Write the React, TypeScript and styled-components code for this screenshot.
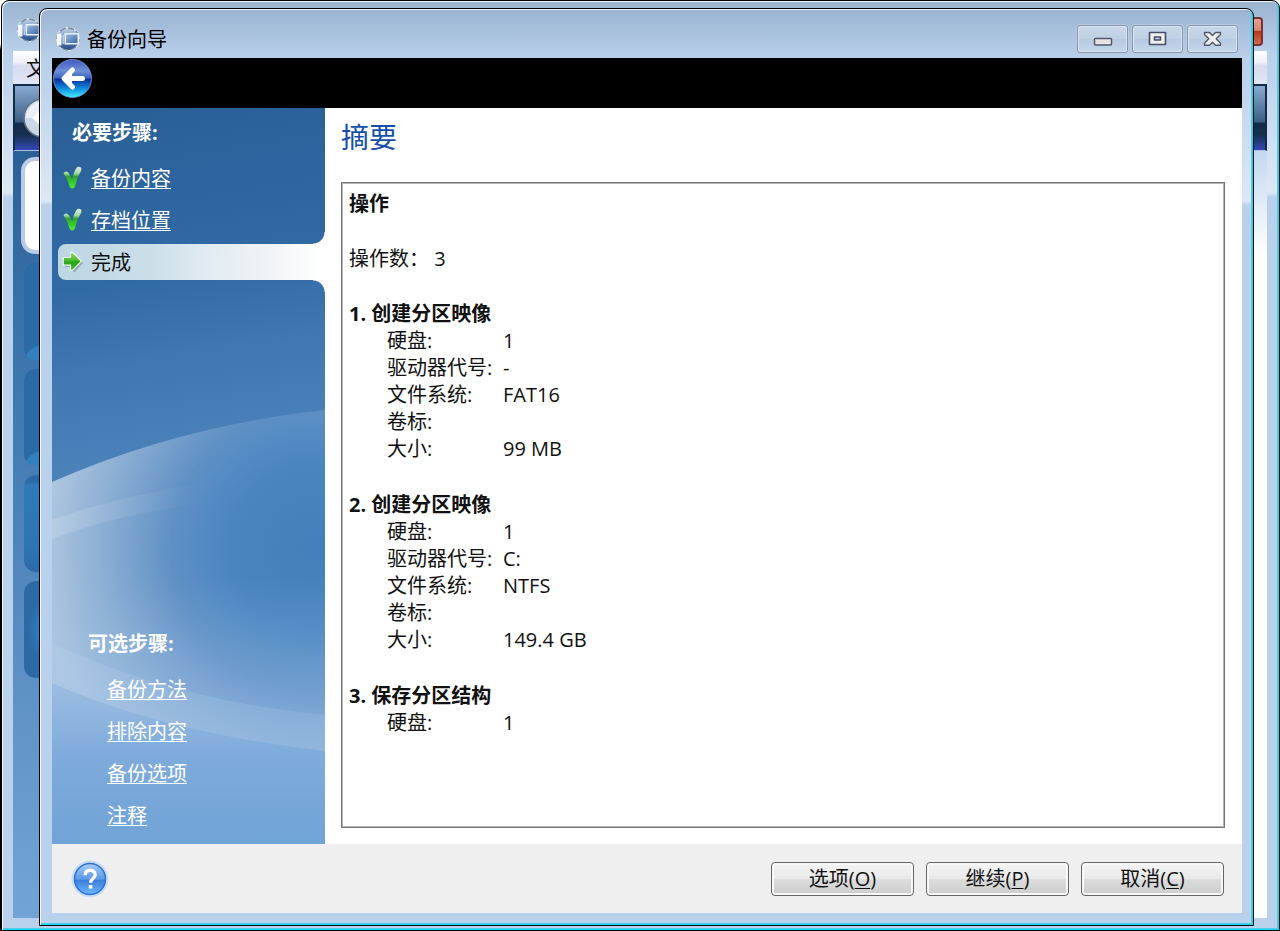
import React from "react";
import styled, { createGlobalStyle, css } from "styled-components";

const GlobalStyle = createGlobalStyle`
  *, *::before, *::after { box-sizing: border-box; }
  body {
    margin: 0;
    font-family: "Open Sans", "Noto Sans CJK SC", sans-serif;
    font-size: 20px;
    line-height: 27px;
    color: #111;
  }
  h1, h2, h3, p, dl, dd, ul { margin: 0; padding: 0; }
  ul { list-style: none; }
  svg { display: block; }
  button { font: inherit; color: inherit; padding: 0; cursor: pointer; }
`;

const Desktop = styled.div`
  display: grid;
  grid-template: minmax(100vh, auto) / minmax(0, 1fr);
  background: linear-gradient(#fff 44px, #000 50px);
`;

const glassFrame = css`
  grid-area: 1 / 1;
  display: flex;
  flex-direction: column;
  border: 1px solid #000;
  border-radius: 8px 8px 0 0;
  box-shadow: inset 1px 1px 0 #f2f6fb, inset -1px -1px 0 #10dcf2, inset -2px -2px 0 #4fcbe8;
`;

const BackWindow = styled.div`
  ${glassFrame}
  margin-left: 1px;
  padding: 0 12px 12px 11px;
  background: linear-gradient(#9ab3d0 0, #b9d0ea 50px, #c0d5ed 84px, #dde8f5 192px, #b9d1ea 196px);
`;

const BackTitleBar = styled.div`
  display: flex;
  justify-content: space-between;
  align-items: flex-start;
  height: 50px;
  padding: 16px 4px 0 3px;
`;

const BackClose = styled.button`
  width: 48px;
  height: 29px;
  border: 2px solid #7c3230;
  border-radius: 4px;
  background: linear-gradient(#e6a094 0, #d98574 45%, #b93a1e 50%, #cf6a4e 100%);
`;

const BackMenuBar = styled.div`
  height: 33px;
  padding: 4px 13px;
  background: linear-gradient(#fff 0, #eef0f9 35%, #d6dbee 45%, #e2e6f5 100%);
`;

const BackToolbar = styled.div`
  height: 67px;
  padding: 12px 8px;
  border: 2px solid #12294a;
  border-bottom: 1px solid #aebfe6;
  background: linear-gradient(#88a9d2 0, #3d5f86 56%, #112b49 58%, #17304f 76%, #3449b8 100%);
`;

const BackBody = styled.div`
  flex: 1;
  display: flex;
  background: linear-gradient(#c4d8f0 0, #fff 105px);
`;

const BackSidebar = styled.div`
  display: flex;
  flex-direction: column;
  gap: 9px;
  width: 120px;
  padding: 6px 0 0 8px;
  background: linear-gradient(#2a6096, #3a70a8 20%, #4a80b8 45%, #6294c8 75%, #72a4d8 100%);
`;

const BackCard = styled.div`
  height: 97px;
  border: 4px solid #b9cbe6;
  border-radius: 14px;
  background: #fff;
`;

const tileFills = {
  curl: "radial-gradient(ellipse 24px 16px at 24px 96px, #3180bf 90%, transparent 96%), #2c6aa6",
  bright: "linear-gradient(#2c6aa8 8%, #3079b8 10%, #2f74b2 75%, #2c69a8 100%)",
  halo: "radial-gradient(ellipse 24px 34px at 28px 50%, #3179b8 60%, transparent 100%), #2c6aa6",
};

const BackTile = styled.div<{ $fill: keyof typeof tileFills }>`
  height: 97px;
  margin-left: 3px;
  border-radius: 12px;
  background: ${(p) => tileFills[p.$fill]};
`;

const Dialog = styled.section`
  ${glassFrame}
  z-index: 1;
  margin: 8px 26px 5px 39px;
  padding: 0 11px 12px 12px;
  background: linear-gradient(#99b3d1 0, #b9d0ea 49px, #c0d5ed 84px, #dde8f5 192px, #b9d1ea 196px);
`;

const TitleBar = styled.header`
  display: flex;
  align-items: center;
  gap: 6px;
  height: 49px;
  padding: 11px 4px 0 3px;
`;

const Title = styled.h1`
  flex: 1;
  font-size: 20px;
  font-weight: 400;
  color: #000;
`;

const WindowControls = styled.div`
  display: flex;
  gap: 4px;
`;

const ControlButton = styled.button`
  display: flex;
  align-items: center;
  justify-content: center;
  width: 51px;
  height: 28px;
  border: 1px solid #8796b0;
  border-radius: 3px;
  background: linear-gradient(#c8d6e8 0, #c0d0e4 50%, #b8cae2 52%, #c5d7ec 100%);
  box-shadow: inset 0 0 0 1px #dbe5f1, 0 0 0 1px #b9c9de;
`;

const NavBar = styled.nav`
  height: 50px;
  padding: 0 1px;
  background: #000;
`;

const IconButton = styled.button`
  display: block;
  border: 0;
  background: none;
`;

const Body = styled.div`
  flex: 1;
  display: flex;
  background: #fff;
`;

const Sidebar = styled.aside`
  position: relative;
  display: flex;
  flex-direction: column;
  flex: 0 0 273px;
  color: #fff;
`;

const SidebarArt = styled.svg`
  position: absolute;
  inset: 0;
  width: 100%;
  height: 100%;
`;

const StepGroup = styled.div<{ $optional?: boolean }>`
  position: relative;
  padding: ${(p) => (p.$optional ? "0 0 11px 36px" : "10px 0 0 6px")};
  margin-top: ${(p) => (p.$optional ? "auto" : "0")};
`;

const StepHeading = styled.h2<{ $indent?: boolean }>`
  height: 30px;
  margin-bottom: 12px;
  padding-left: ${(p) => (p.$indent ? "14px" : "0")};
  font-size: 20px;
  line-height: 30px;
  font-weight: 700;
`;

const StepList = styled.ul<{ $indent?: boolean }>`
  display: flex;
  flex-direction: column;
  gap: 6px;
  padding-left: ${(p) => (p.$indent ? "19px" : "0")};
`;

const Step = styled.li<{ $active?: boolean }>`
  position: relative;
  display: flex;
  align-items: center;
  height: 36px;
  ${(p) =>
    p.$active &&
    css`
      color: #111;
      border-radius: 8px 0 0 8px;
      background: linear-gradient(90deg, #bcd6e3 0, #cbdfe9 35%, #e0ebf1 55%, #eff3f6 78%, #fff 98%);
      &::before,
      &::after {
        content: "";
        position: absolute;
        right: 0;
        width: 12px;
        height: 12px;
      }
      &::before {
        bottom: 100%;
        background: radial-gradient(circle at 0 0, transparent 11px, #fff 12px);
      }
      &::after {
        top: 100%;
        background: radial-gradient(circle at 0 100%, transparent 11px, #fff 12px);
      }
    `}
`;

const StepIcon = styled.svg`
  width: 24px;
  height: 24px;
  margin: 0 6px 0 3px;
`;

const StepLink = styled.a`
  color: inherit;
  text-underline-offset: 2px;
  text-decoration-thickness: 1px;
`;

const Main = styled.main`
  flex: 1;
  display: flex;
  flex-direction: column;
  min-width: 0;
  padding: 12px 17px 16px 16px;
`;

const PageTitle = styled.h2`
  margin-bottom: 28px;
  font-size: 28px;
  line-height: 34px;
  font-weight: 400;
  color: #1450a8;
`;

const Summary = styled.div`
  flex: 1;
  display: flex;
  flex-direction: column;
  gap: 28px;
  padding: 7px;
  border: 1px solid #757575;
  box-shadow: inset 0 0 0 1px #b4b4b4;
`;

const OperationList = styled.div`
  display: flex;
  flex-direction: column;
  gap: 29px;
`;

const SummaryHeading = styled.h3`
  font-size: 20px;
  font-weight: 700;
`;

const Details = styled.dl`
  display: grid;
  grid-template-columns: 116px 1fr;
  grid-auto-rows: 27px;
  padding-left: 38px;
`;

const Term = styled.dt`
  white-space: nowrap;
`;

const Footer = styled.footer`
  display: flex;
  align-items: center;
  height: 69px;
  padding: 0 18px 0 19px;
  background: #efefef;
`;

const FooterActions = styled.div`
  display: flex;
  gap: 12px;
  margin-left: auto;
`;

const ActionButton = styled.button`
  width: 143px;
  height: 34px;
  border: 1px solid #666;
  border-radius: 4px;
  background: linear-gradient(#f3f3f3 0, #eaeaea 48%, #dcdcdc 52%, #cdcdcd 100%);
  box-shadow: inset 0 0 0 2px #f8f8f8;
  u {
    text-underline-offset: 2px;
    text-decoration-thickness: 1px;
  }
`;

const AppIcon = () => (
  <svg width="26" height="26" viewBox="0 0 26 26" aria-hidden="true">
    <defs>
      <linearGradient id="app" x1="0" y1="0" x2="0" y2="1">
        <stop offset="0" stopColor="#c3d3e8" />
        <stop offset="0.4" stopColor="#7d9cc8" />
        <stop offset="1" stopColor="#234a85" />
      </linearGradient>
      <linearGradient id="app-screen" x1="0" y1="0" x2="1" y2="1">
        <stop offset="0" stopColor="#9bb8de" />
        <stop offset="1" stopColor="#3f6aa8" />
      </linearGradient>
    </defs>
    <circle cx="13" cy="13" r="12" fill="#dfe7f0" />
    <circle cx="13" cy="13" r="11" fill="url(#app)" stroke="#76879f" strokeWidth="1.500" strokeDasharray="6 2.600" />
    <path d="M2 7.500h4.500v12H2z" fill="#f2f7fc" />
    <path d="M7.500 9h1.500v9H7.500z" fill="#b9cee8" />
    <path d="M9.500 7H24v11.500H9.500z" fill="#e9f1fa" />
    <path d="M11 8.500h11.500v8.500H11z" fill="url(#app-screen)" />
  </svg>
);

const CheckIcon = () => (
  <StepIcon viewBox="0 0 24 24" aria-hidden="true">
    <defs>
      <linearGradient id="check" x1="0" y1="0" x2="0" y2="1">
        <stop offset="0" stopColor="#dcefe0" />
        <stop offset="0.3" stopColor="#a3d8a3" />
        <stop offset="0.45" stopColor="#2fa52f" />
        <stop offset="0.7" stopColor="#35c927" />
        <stop offset="1" stopColor="#4af032" />
      </linearGradient>
    </defs>
    <path
      d="M3 6.500Q5.800 4.200 8 7.500L11.200 13.200Q12.400 6.500 15.200 2.200Q17.400 -.2 20 1.600Q20.800 2.800 20 5Q15.600 12 14 20.200Q12.800 22.800 10.800 22.400Q8.800 22 8.200 19.800Q6.600 12.600 3 8.400Q2.500 7.300 3 6.500Z"
      fill="url(#check)"
    />
  </StepIcon>
);

const ArrowIcon = () => (
  <StepIcon viewBox="0 0 24 24" aria-hidden="true">
    <defs>
      <linearGradient id="arrow" x1="0" y1="0" x2="0" y2="1">
        <stop offset="0" stopColor="#8bdc6c" />
        <stop offset="0.45" stopColor="#45bd2c" />
        <stop offset="0.55" stopColor="#2ba31a" />
        <stop offset="1" stopColor="#3fb82c" />
      </linearGradient>
    </defs>
    <path d="M4 9.500h7.500V4.500L22 13l-8.500 9-3-1.500v-3.500H4z" fill="#4d6d78" opacity="0.45" />
    <path
      d="M2.200 7.500H9.500V2.800Q10.500 1.800 12 2.800L20.500 11.200 12 19.800Q10.500 20.800 9.500 19.800V15.200H2.200z"
      fill="url(#arrow)"
      stroke="#f0f9ee"
      strokeWidth="1.200"
      strokeLinejoin="round"
    />
  </StepIcon>
);

const BackIcon = () => (
  <svg width="40" height="41" viewBox="0 0 40 41" aria-hidden="true">
    <defs>
      <linearGradient id="orb" x1="0" y1="0" x2="0" y2="1">
        <stop offset="0" stopColor="#3f58c0" />
        <stop offset="0.3" stopColor="#6f8fd8" />
        <stop offset="0.48" stopColor="#3a66c0" />
        <stop offset="0.52" stopColor="#06309a" />
        <stop offset="0.75" stopColor="#0f86dc" />
        <stop offset="1" stopColor="#3ff0ff" />
      </linearGradient>
    </defs>
    <circle cx="19.500" cy="20.500" r="19" fill="url(#orb)" stroke="#7f9ce0" strokeWidth="0.800" />
    <path d="M19.500 12 11 20.500l8.500 8.500M12 20.500h17.500" stroke="#fff" strokeWidth="5" strokeLinecap="round" strokeLinejoin="round" fill="none" />
    <path d="M10 20.500 19 12v17z" fill="#fff" />
  </svg>
);

const BackWindowOrb = () => (
  <svg width="40" height="40" viewBox="0 0 40 40" aria-hidden="true">
    <circle cx="20" cy="20" r="19" fill="#c9d8e4" stroke="#5e7187" strokeWidth="1.500" />
    <path d="M3 20a17 17 0 0 1 34 0z" fill="#eaf0f5" />
    <path d="M9 20 20 10v20z" fill="#fff" />
  </svg>
);

const HelpIcon = () => (
  <svg width="38" height="38" viewBox="0 0 38 38" aria-hidden="true">
    <defs>
      <linearGradient id="help" x1="0" y1="0" x2="0" y2="1">
        <stop offset="0" stopColor="#a8cbf6" />
        <stop offset="0.5" stopColor="#5c9ae8" />
        <stop offset="0.55" stopColor="#3b7fdc" />
        <stop offset="1" stopColor="#6fb8fb" />
      </linearGradient>
    </defs>
    <circle cx="19" cy="19" r="18.500" fill="#c8def8" />
    <circle cx="19" cy="19" r="15.500" fill="url(#help)" stroke="#2f6fd0" strokeWidth="1.500" />
    <path
      d="M14.200 15.200c0-3.200 2-5 5-5s5 1.800 5 4.500c0 3.800-4.600 3.800-4.600 8"
      stroke="#fff"
      strokeWidth="3.400"
      fill="none"
    />
    <rect x="17.800" y="25" width="3.600" height="3.600" fill="#fff" />
  </svg>
);

const MinimizeIcon = () => (
  <svg width="20" height="18" viewBox="0 0 20 18" aria-hidden="true">
    <rect x="1.500" y="8.500" width="17" height="6.500" rx="1" fill="#e6e4e2" stroke="#50586c" strokeWidth="1.500" />
  </svg>
);

const MaximizeIcon = () => (
  <svg width="20" height="16" viewBox="0 0 20 16" aria-hidden="true">
    <path
      d="M1.500 1.500h16v12h-16zM6.500 6v3h6V6z"
      fillRule="evenodd"
      fill="#f0efee"
      stroke="#454e66"
      strokeWidth="1.600"
      strokeLinejoin="round"
    />
  </svg>
);

const CloseIcon = () => (
  <svg width="20" height="16" viewBox="0 0 20 16" aria-hidden="true">
    <path
      d="M1.500 1.500H6.500L9.500 4.500l3-3h5v2L13.200 7.800l4.300 4.500v2h-5l-3-3-3 3h-5v-2L5.800 7.800 1.500 3.500z"
      fill="#f0efee"
      stroke="#50586c"
      strokeWidth="1.400"
      strokeLinejoin="round"
    />
  </svg>
);

const SidebarBackground = () => (
  <SidebarArt viewBox="0 0 273 736" preserveAspectRatio="none" aria-hidden="true">
    <defs>
      <linearGradient id="sky" x1="0" y1="0" x2="0.06" y2="1">
        <stop offset="0" stopColor="#2a5f95" />
        <stop offset="0.25" stopColor="#306aa5" />
        <stop offset="0.36" stopColor="#4177b0" />
        <stop offset="0.5" stopColor="#4c82ba" />
        <stop offset="1" stopColor="#5a90c8" />
      </linearGradient>
      <radialGradient id="glow" gradientUnits="userSpaceOnUse" cx="262" cy="440" r="275">
        <stop offset="0" stopColor="#447fbb" />
        <stop offset="0.3" stopColor="#4a85c0" />
        <stop offset="0.52" stopColor="#5f90c5" />
        <stop offset="0.75" stopColor="#88acd2" />
        <stop offset="1" stopColor="#b0c9e1" />
      </radialGradient>
      <linearGradient id="floor" x1="0" y1="0" x2="0" y2="1">
        <stop offset="0" stopColor="#9dbde2" />
        <stop offset="0.45" stopColor="#7eabdb" />
        <stop offset="1" stopColor="#70a3d7" />
      </linearGradient>
      <linearGradient id="streak" x1="0" y1="0" x2="1" y2="0">
        <stop offset="0" stopColor="#fff" stopOpacity="0.16" />
        <stop offset="1" stopColor="#fff" stopOpacity="0" />
      </linearGradient>
      <linearGradient id="lift" x1="0" y1="0" x2="0" y2="1">
        <stop offset="0" stopColor="#8fb6e0" stopOpacity="0" />
        <stop offset="1" stopColor="#8fb6e0" stopOpacity="0.600" />
      </linearGradient>
      <linearGradient id="band" x1="0" y1="0" x2="1" y2="0">
        <stop offset="0" stopColor="#d0e0f2" stopOpacity="0.150" />
        <stop offset="1" stopColor="#a8c8ea" stopOpacity="0.220" />
      </linearGradient>
    </defs>
    <rect width="273" height="736" fill="url(#sky)" />
    <path d="M0 374Q126 318 273 302V736H0Z" fill="url(#glow)" />
    <path d="M0 412Q60 390 150 375V395Q60 408 0 431Z" fill="url(#streak)" />
    <rect y="470" width="273" height="180" fill="url(#lift)" />
    <path d="M0 535Q120 592 273 607V660H0Z" fill="url(#band)" />
    <path d="M0 575Q110 624 273 643V736H0Z" fill="url(#floor)" />
  </SidebarArt>
);

const operations = [
  {
    title: "1. 创建分区映像",
    rows: [
      ["硬盘:", "1"],
      ["驱动器代号:", "-"],
      ["文件系统:", "FAT16"],
      ["卷标:", ""],
      ["大小:", "99 MB"],
    ],
  },
  {
    title: "2. 创建分区映像",
    rows: [
      ["硬盘:", "1"],
      ["驱动器代号:", "C:"],
      ["文件系统:", "NTFS"],
      ["卷标:", ""],
      ["大小:", "149.4 GB"],
    ],
  },
  { title: "3. 保存分区结构", rows: [["硬盘:", "1"]] },
];

const requiredSteps = ["备份内容", "存档位置"];
const optionalSteps = ["备份方法", "排除内容", "备份选项", "注释"];
const actions = [
  { label: "选项", accessKey: "O" },
  { label: "继续", accessKey: "P" },
  { label: "取消", accessKey: "C" },
];

export default function App() {
  return (
    <>
      <GlobalStyle />
      <Desktop>
        <BackWindow aria-hidden="true">
          <BackTitleBar>
            <AppIcon />
            <BackClose tabIndex={-1} />
          </BackTitleBar>
          <BackMenuBar>文</BackMenuBar>
          <BackToolbar>
            <BackWindowOrb />
          </BackToolbar>
          <BackBody>
            <BackSidebar>
              <BackCard />
              <BackTile $fill="curl" />
              <BackTile $fill="curl" />
              <BackTile $fill="bright" />
              <BackTile $fill="halo" />
            </BackSidebar>
          </BackBody>
        </BackWindow>

        <Dialog role="dialog" aria-labelledby="dialog-title">
          <TitleBar>
            <AppIcon />
            <Title id="dialog-title">备份向导</Title>
            <WindowControls>
              <ControlButton aria-label="最小化">
                <MinimizeIcon />
              </ControlButton>
              <ControlButton aria-label="最大化">
                <MaximizeIcon />
              </ControlButton>
              <ControlButton aria-label="关闭">
                <CloseIcon />
              </ControlButton>
            </WindowControls>
          </TitleBar>
          <NavBar>
            <IconButton aria-label="后退">
              <BackIcon />
            </IconButton>
          </NavBar>
          <Body>
            <Sidebar>
              <SidebarBackground />
              <StepGroup>
                <StepHeading $indent>必要步骤:</StepHeading>
                <StepList>
                  {requiredSteps.map((step) => (
                    <Step key={step}>
                      <CheckIcon />
                      <StepLink href="#">{step}</StepLink>
                    </Step>
                  ))}
                  <Step $active aria-current="step">
                    <ArrowIcon />
                    完成
                  </Step>
                </StepList>
              </StepGroup>
              <StepGroup $optional>
                <StepHeading>可选步骤:</StepHeading>
                <StepList $indent>
                  {optionalSteps.map((step) => (
                    <Step key={step}>
                      <StepLink href="#">{step}</StepLink>
                    </Step>
                  ))}
                </StepList>
              </StepGroup>
            </Sidebar>
            <Main>
              <PageTitle>摘要</PageTitle>
              <Summary>
                <SummaryHeading>操作</SummaryHeading>
                <p>操作数： 3</p>
                <OperationList>
                  {operations.map((op) => (
                    <section key={op.title}>
                      <SummaryHeading>{op.title}</SummaryHeading>
                      <Details>
                        {op.rows.map(([term, value]) => (
                          <React.Fragment key={term}>
                            <Term>{term}</Term>
                            <dd>{value}</dd>
                          </React.Fragment>
                        ))}
                      </Details>
                    </section>
                  ))}
                </OperationList>
              </Summary>
            </Main>
          </Body>
          <Footer>
            <IconButton aria-label="帮助">
              <HelpIcon />
            </IconButton>
            <FooterActions>
              {actions.map((action) => (
                <ActionButton key={action.accessKey}>
                  {action.label}(<u>{action.accessKey}</u>)
                </ActionButton>
              ))}
            </FooterActions>
          </Footer>
        </Dialog>
      </Desktop>
    </>
  );
}
